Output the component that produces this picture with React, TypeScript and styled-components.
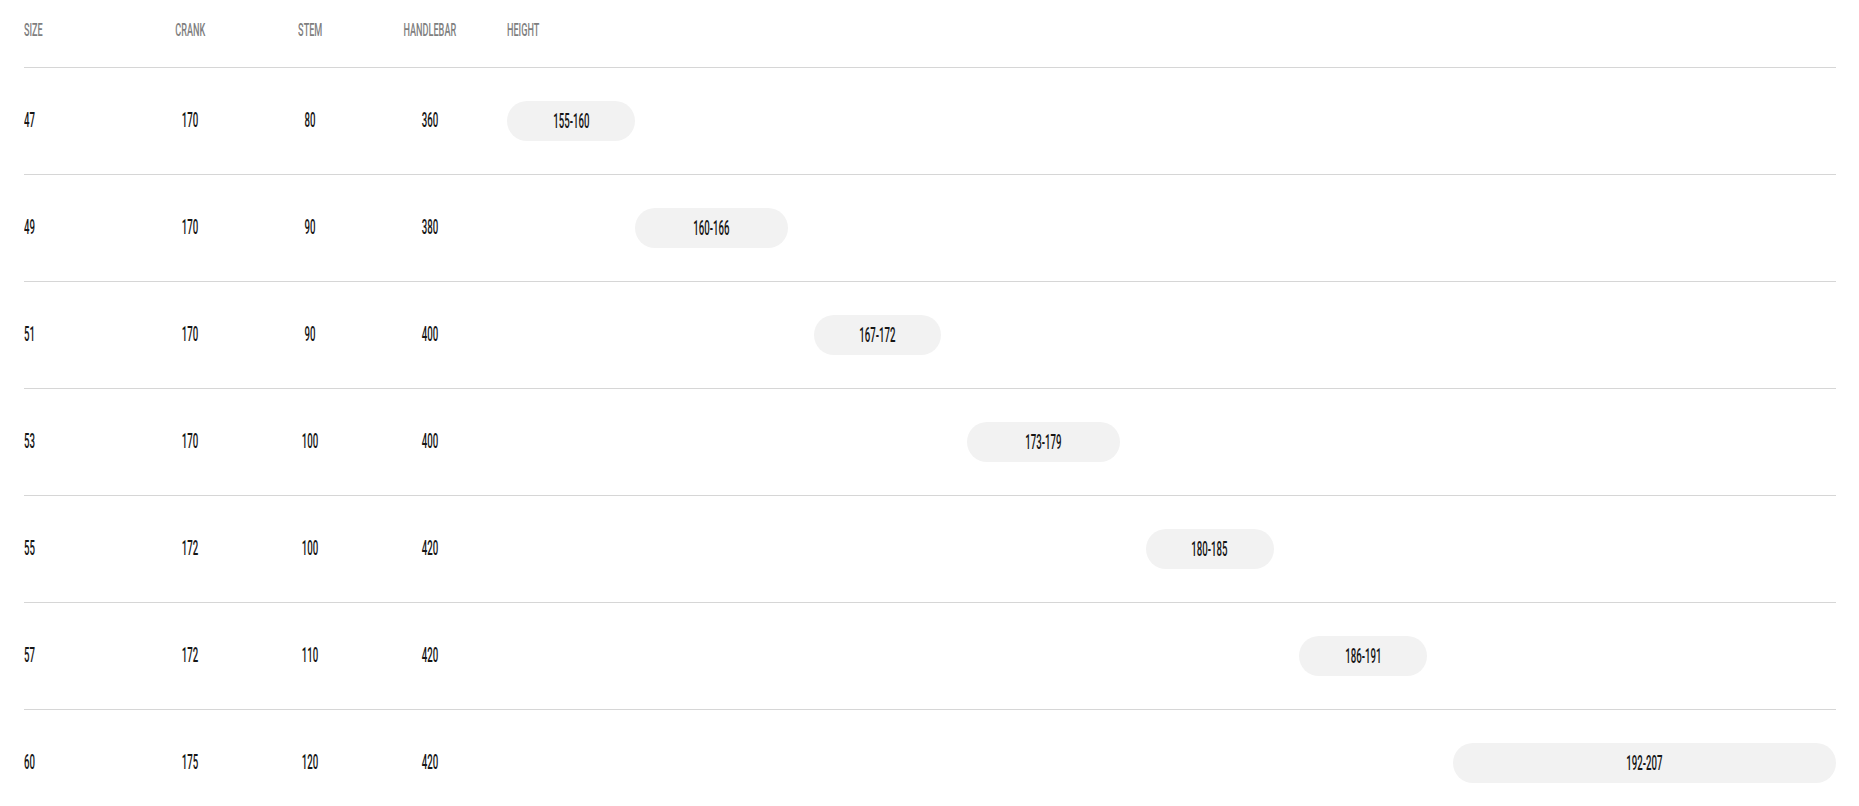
import React from 'react';
import styled, { createGlobalStyle } from 'styled-components';

const GlobalStyle = createGlobalStyle`
  body {
    margin: 0;
    background: #ffffff;
    font-family: Roboto, "Liberation Sans", sans-serif;
  }
`;

const MIN_HEIGHT = 155;
const MAX_HEIGHT = 207;

const sizes = [
  { size: '47', crank: '170', stem: '80', handlebar: '360', from: 155, to: 160 },
  { size: '49', crank: '170', stem: '90', handlebar: '380', from: 160, to: 166 },
  { size: '51', crank: '170', stem: '90', handlebar: '400', from: 167, to: 172 },
  { size: '53', crank: '170', stem: '100', handlebar: '400', from: 173, to: 179 },
  { size: '55', crank: '172', stem: '100', handlebar: '420', from: 180, to: 185 },
  { size: '57', crank: '172', stem: '110', handlebar: '420', from: 186, to: 191 },
  { size: '60', crank: '175', stem: '120', handlebar: '420', from: 192, to: 207 },
];

const Table = styled.div`
  padding: 0 23px 0 24px;
`;

const Row = styled.div<{ $head?: boolean }>`
  display: grid;
  grid-template-columns: 106px 120px 120px 120px 1fr;
  align-items: ${(p) => (p.$head ? 'start' : 'center')};
  height: ${(p) => (p.$head ? '47px' : '106px')};
  padding-top: ${(p) => (p.$head ? '20px' : '0')};
  border-bottom: 1px solid #d6d6d6;
`;

const Cell = styled.div<{ $left?: boolean }>`
  text-align: ${(p) => (p.$left ? 'left' : 'center')};
  line-height: 20px;
`;

// condensed look: the display face of the original isn't installed, so squeeze Roboto
const Glyphs = styled.span<{ $head?: boolean; $left?: boolean }>`
  display: inline-block;
  font-size: ${(p) => (p.$head ? '19px' : '21px')};
  font-weight: 500;
  color: ${(p) => (p.$head ? '#7f7f7f' : '#161616')};
  transform: scaleX(${(p) => (p.$head ? 0.48 : 0.46)});
  transform-origin: ${(p) => (p.$left ? 'left center' : 'center')};
  white-space: nowrap;
`;

const HeadHeight = styled.div`
  padding-left: 17px;
  line-height: 20px;
`;

const Track = styled.div`
  display: grid;
  grid-template-columns: repeat(${MAX_HEIGHT - MIN_HEIGHT}, 1fr);
  padding-left: 17px;
`;

const Pill = styled.div`
  height: 40px;
  border-radius: 20px;
  background: #f2f2f2;
  display: flex;
  align-items: center;
  justify-content: center;
`;

export default function App() {
  return (
    <>
      <GlobalStyle />
      <Table>
        <Row $head>
          <Cell $left><Glyphs $head $left>SIZE</Glyphs></Cell>
          <Cell><Glyphs $head>CRANK</Glyphs></Cell>
          <Cell><Glyphs $head>STEM</Glyphs></Cell>
          <Cell><Glyphs $head>HANDLEBAR</Glyphs></Cell>
          <HeadHeight><Glyphs $head $left>HEIGHT</Glyphs></HeadHeight>
        </Row>

        {sizes.map((s) => (
          <Row key={s.size}>
            <Cell $left><Glyphs $left>{s.size}</Glyphs></Cell>
            <Cell><Glyphs>{s.crank}</Glyphs></Cell>
            <Cell><Glyphs>{s.stem}</Glyphs></Cell>
            <Cell><Glyphs>{s.handlebar}</Glyphs></Cell>
            <Track>
              <Pill style={{ gridColumn: `${s.from - MIN_HEIGHT + 1} / ${s.to - MIN_HEIGHT + 1}` }}>
                <Glyphs>{s.from}-{s.to}</Glyphs>
              </Pill>
            </Track>
          </Row>
        ))}
      </Table>
    </>
  );
}
